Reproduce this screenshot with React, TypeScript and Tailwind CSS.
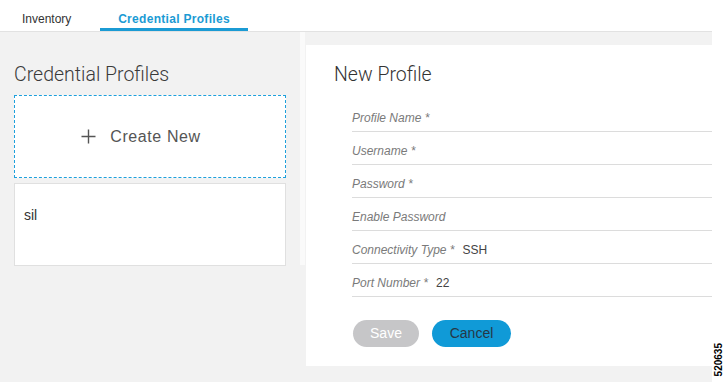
import React from 'react';

const fields: { label: string; value?: string }[] = [
  { label: 'Profile Name *' },
  { label: 'Username *' },
  { label: 'Password *' },
  { label: 'Enable Password' },
  { label: 'Connectivity Type *', value: 'SSH' },
  { label: 'Port Number *', value: '22' },
];

const FormRow: React.FC<{ label: string; value?: string }> = ({ label, value }) => (
  <div className="h-[33px] border-b border-[#dcdcdc] pt-[11px] flex items-start gap-[8px] text-[12px] leading-[16px]">
    <span className="italic text-[#7a7a7a]">{label}</span>
    {value && <span className="text-[#444]">{value}</span>}
  </div>
);

const App: React.FC = () => {
  return (
    <div className="w-[726px] h-[382px] flex bg-white overflow-hidden font-['Liberation_Sans',Arial,sans-serif]">
      <div className="w-[712px] flex flex-col">
        {/* tabs */}
        <div className="h-[32px] bg-white border-b border-[#e2e2e2] flex text-[12px]">
          <div className="w-[100px] pl-[22px] pt-[10px] text-[#333]">Inventory</div>
          <div className="w-[148px] flex flex-col">
            <div className="flex-1 pt-[10px] text-center font-bold tracking-[0.3px] text-[#1b9bd4]">Credential Profiles</div>
            <div className="h-[3px] bg-[#1b9bd4]"></div>
          </div>
        </div>

        <div className="flex-1 bg-[#f2f2f2] flex">
          {/* left list */}
          <div className="w-[300px] pl-[14px] pr-[14px] pt-[31px] flex flex-col">
            <h2 className="text-[19.5px] leading-[24px] text-[#3a3a3a] font-['Roboto',sans-serif] font-light">Credential Profiles</h2>
            <div className="mt-[8px] h-[83px] bg-white border border-dashed border-[#1ea0dc] pr-[18px] flex items-center justify-center gap-[14px] text-[#555]">
              <svg width="15" height="15" viewBox="0 0 15 15">
                <path d="M7.5 0.5V14.5M0.5 7.5H14.5" stroke="#555" strokeWidth="1.4" fill="none" />
              </svg>
              <span className="text-[16px] tracking-[0.6px]">Create New</span>
            </div>
            <div className="mt-[5px] h-[83px] bg-white border border-[#e0e0e0] pl-[9px] pt-[21px] text-[14px] leading-[20px] text-[#333]">
              sil
            </div>
          </div>

          {/* scroll strip */}
          <div className="w-[5px] h-[233px] bg-[#fafafa]"></div>
          <div className="w-[1px]"></div>

          {/* new profile form */}
          <div className="flex-1 pt-[13px] pb-[16px]">
            <div className="h-full bg-white pl-[28px] pt-[18px]">
              <h2 className="text-[19.5px] leading-[24px] text-[#333] font-['Roboto',sans-serif] font-light">New Profile</h2>
              <div className="mt-[12px] ml-[18px]">
                {fields.map((f) => (
                  <FormRow key={f.label} label={f.label} value={f.value} />
                ))}
              </div>
              <div className="mt-[23px] ml-[19px] flex gap-[13px]">
                <button className="w-[66px] h-[27px] rounded-full bg-[#c6c6c8] text-white text-[14px]">Save</button>
                <button className="w-[79px] h-[27px] rounded-full bg-[#109ad7] text-[#263746] text-[14px]">Cancel</button>
              </div>
            </div>
          </div>
        </div>
      </div>

      {/* figure number margin */}
      <div className="w-[14px] flex flex-col justify-end items-center pb-[6px]">
        <span className="[writing-mode:vertical-rl] rotate-180 text-[10px] font-bold text-black leading-none">520635</span>
      </div>
    </div>
  );
};

export default App;
